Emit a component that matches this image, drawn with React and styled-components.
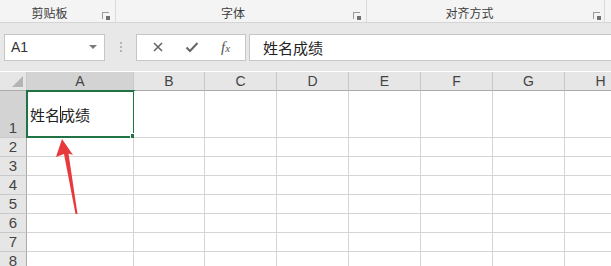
import React from "react";
import styled, { createGlobalStyle } from "styled-components";

const Global = createGlobalStyle`
  html, body { margin: 0; padding: 0; background: #ffffff; overflow: hidden; }
  body { width: 611px; height: 266px; font-family: "Noto Sans CJK SC", "Noto Sans", sans-serif; }
`;

const Page = styled.div`
  position: relative;
  width: 611px;
  height: 266px;
  overflow: hidden;
  background: #fff;
`;

const Ribbon = styled.div`
  display: flex;
  height: 22px;
  background: #f4f4f4;
  border-bottom: 1px solid #d5d5d5;
`;

const Group = styled.div`
  position: relative;
  flex: 0 0 ${(p) => p.$w}px;
  display: flex;
  align-items: center;
  justify-content: center;
  border-right: ${(p) => (p.$last ? "none" : "1px solid #dadada")};
  box-sizing: border-box;
  padding-top: 2px;
  font-size: 12px;
  color: #3c3c3c;
  padding-right: ${(p) => p.$shift || 0}px;
`;

const Launcher = styled.span`
  position: absolute;
  right: ${(p) => p.$r}px;
  top: 12px;
  width: 7px;
  height: 7px;
  border-left: 1px solid #9a9a9a;
  border-top: 1px solid #9a9a9a;
  box-sizing: border-box;
  &::after {
    content: "";
    position: absolute;
    right: -1px;
    bottom: -1px;
    width: 4px;
    height: 4px;
    background: #707070;
  }
`;

const FormulaRow = styled.div`
  display: flex;
  align-items: center;
  height: 48px;
  background: #e8e8e8;
  padding-left: 4px;
  box-sizing: border-box;
`;

const NameBox = styled.div`
  display: flex;
  align-items: center;
  justify-content: space-between;
  width: 101px;
  height: 27px;
  background: #fff;
  border: 1px solid #c6c6c6;
  box-sizing: border-box;
  padding: 0 7px 0 6px;
  font-family: "Liberation Sans", Arial, sans-serif;
  font-size: 14px;
  color: #333;
`;

const Caret = styled.span`
  width: 0;
  height: 0;
  border-left: 4px solid transparent;
  border-right: 4px solid transparent;
  border-top: 4px solid #7a7a7a;
`;

const Dots = styled.div`
  display: flex;
  flex-direction: column;
  gap: 2px;
  margin: 0 14px 0 15px;
  span {
    width: 2px;
    height: 2px;
    background: #b5b5b5;
  }
`;

const Buttons = styled.div`
  display: flex;
  align-items: center;
  justify-content: space-around;
  width: 110px;
  height: 27px;
  background: #fff;
  border: 1px solid #c6c6c6;
  box-sizing: border-box;
  padding: 0 4px;
`;

const Fx = styled.span`
  font-family: "Liberation Serif", "Times New Roman", serif;
  font-style: italic;
  font-size: 15px;
  color: #555;
  span { font-size: 11px; }
`;

const Input = styled.div`
  flex: 1;
  height: 27px;
  margin-left: 3px;
  background: #fff;
  border: 1px solid #c6c6c6;
  border-right: none;
  box-sizing: border-box;
  display: flex;
  align-items: center;
  padding-left: 13px;
  font-size: 15px;
  color: #222;
`;

const Sheet = styled.div`
  display: grid;
  grid-template-columns: 27px 107px 71px 72px 72px 72px 72px 72px 72px;
  grid-template-rows: 19px 47px repeat(7, 19px);
  margin-top: 1px;
`;

const Corner = styled.div`
  position: relative;
  background: #e6e6e6;
  border-right: 1px solid #c9c9c9;
  border-bottom: 1px solid #ababab;
  box-sizing: border-box;
  &::after {
    content: "";
    position: absolute;
    right: 3px;
    bottom: 3px;
    width: 0;
    height: 0;
    border-left: 11px solid transparent;
    border-bottom: 11px solid #b4b4b4;
  }
`;

const ColHead = styled.div`
  background: ${(p) => (p.$sel ? "#d3d3d3" : "#e6e6e6")};
  border-right: 1px solid #c9c9c9;
  border-bottom: 1px solid ${(p) => (p.$sel ? "#217346" : "#ababab")};
  box-sizing: border-box;
  display: flex;
  align-items: center;
  justify-content: center;
  font-family: "Liberation Sans", Arial, sans-serif;
  font-size: 14px;
  color: #444;
`;

const RowHead = styled.div`
  background: ${(p) => (p.$sel ? "#d3d3d3" : "#e6e6e6")};
  border-right: 1px solid ${(p) => (p.$sel ? "#217346" : "#ababab")};
  border-bottom: 1px solid #c9c9c9;
  box-sizing: border-box;
  display: flex;
  align-items: flex-end;
  justify-content: center;
  font-family: "Liberation Sans", Arial, sans-serif;
  font-size: 15px;
  line-height: 18px;
  color: #444;
`;

const Cell = styled.div`
  position: relative;
  border-right: 1px solid #d4d4d4;
  border-bottom: 1px solid #d4d4d4;
  box-sizing: border-box;
  background: #fff;
`;

const ActiveCell = styled.div`
  position: relative;
  margin: -1px -1px 0 -1px;
  border: 2px solid #217346;
  background: #fff;
  display: flex;
  align-items: center;
  padding-left: 2px;
  font-size: 15px;
  color: #222;
  &::after {
    content: "";
    position: absolute;
    right: -4px;
    bottom: -4px;
    width: 5px;
    height: 5px;
    background: #217346;
    border: 1px solid #fff;
  }
`;

const TextCaret = styled.span`
  display: inline-block;
  width: 1px;
  height: 17px;
  background: #222;
  vertical-align: middle;
  margin: 0 -0.5px;
`;

const Arrow = styled.svg`
  position: absolute;
  left: 0;
  top: 0;
  pointer-events: none;
`;

const cols = ["A", "B", "C", "D", "E", "F", "G", "H"];
const rows = [1, 2, 3, 4, 5, 6, 7, 8];

export default function App() {
  return (
    <Page>
      <Global />
      <Ribbon>
        <Group $w={116} $shift={16}>
          剪贴板
          <Launcher $r={6} />
        </Group>
        <Group $w={251} $shift={16}>
          字体
          <Launcher $r={6} />
        </Group>
        <Group $w={238} $shift={32}>
          对齐方式
          <Launcher $r={4} />
        </Group>
        <Group $w={6} $last />
      </Ribbon>
      <FormulaRow>
        <NameBox>
          A1
          <Caret />
        </NameBox>
        <Dots>
          <span />
          <span />
          <span />
        </Dots>
        <Buttons>
          <svg width="12" height="12" viewBox="0 0 12 12">
            <path d="M2 2 L10 10 M10 2 L2 10" stroke="#666" strokeWidth="1.6" fill="none" />
          </svg>
          <svg width="14" height="12" viewBox="0 0 14 12">
            <path d="M1.5 6.5 L5 10 L12.5 2" stroke="#666" strokeWidth="2" fill="none" />
          </svg>
          <Fx>
            f<span>x</span>
          </Fx>
        </Buttons>
        <Input>姓名成绩</Input>
      </FormulaRow>
      <Sheet>
        <Corner />
        {cols.map((c) => (
          <ColHead key={c} $sel={c === "A"}>
            {c}
          </ColHead>
        ))}
        {rows.map((r) => (
          <React.Fragment key={r}>
            <RowHead $sel={r === 1}>{r}</RowHead>
            {cols.map((c) =>
              r === 1 && c === "A" ? (
                <ActiveCell key={c}>
                  姓名<TextCaret />成绩
                </ActiveCell>
              ) : (
                <Cell key={c} />
              )
            )}
          </React.Fragment>
        ))}
      </Sheet>
      <Arrow width="611" height="266">
        <path
          d="M62 139 L73 155 L68.5 153.5 L77.5 214 L75.5 214 L64 154 L56 157 Z"
          fill="#e8393c"
        />
      </Arrow>
    </Page>
  );
}
